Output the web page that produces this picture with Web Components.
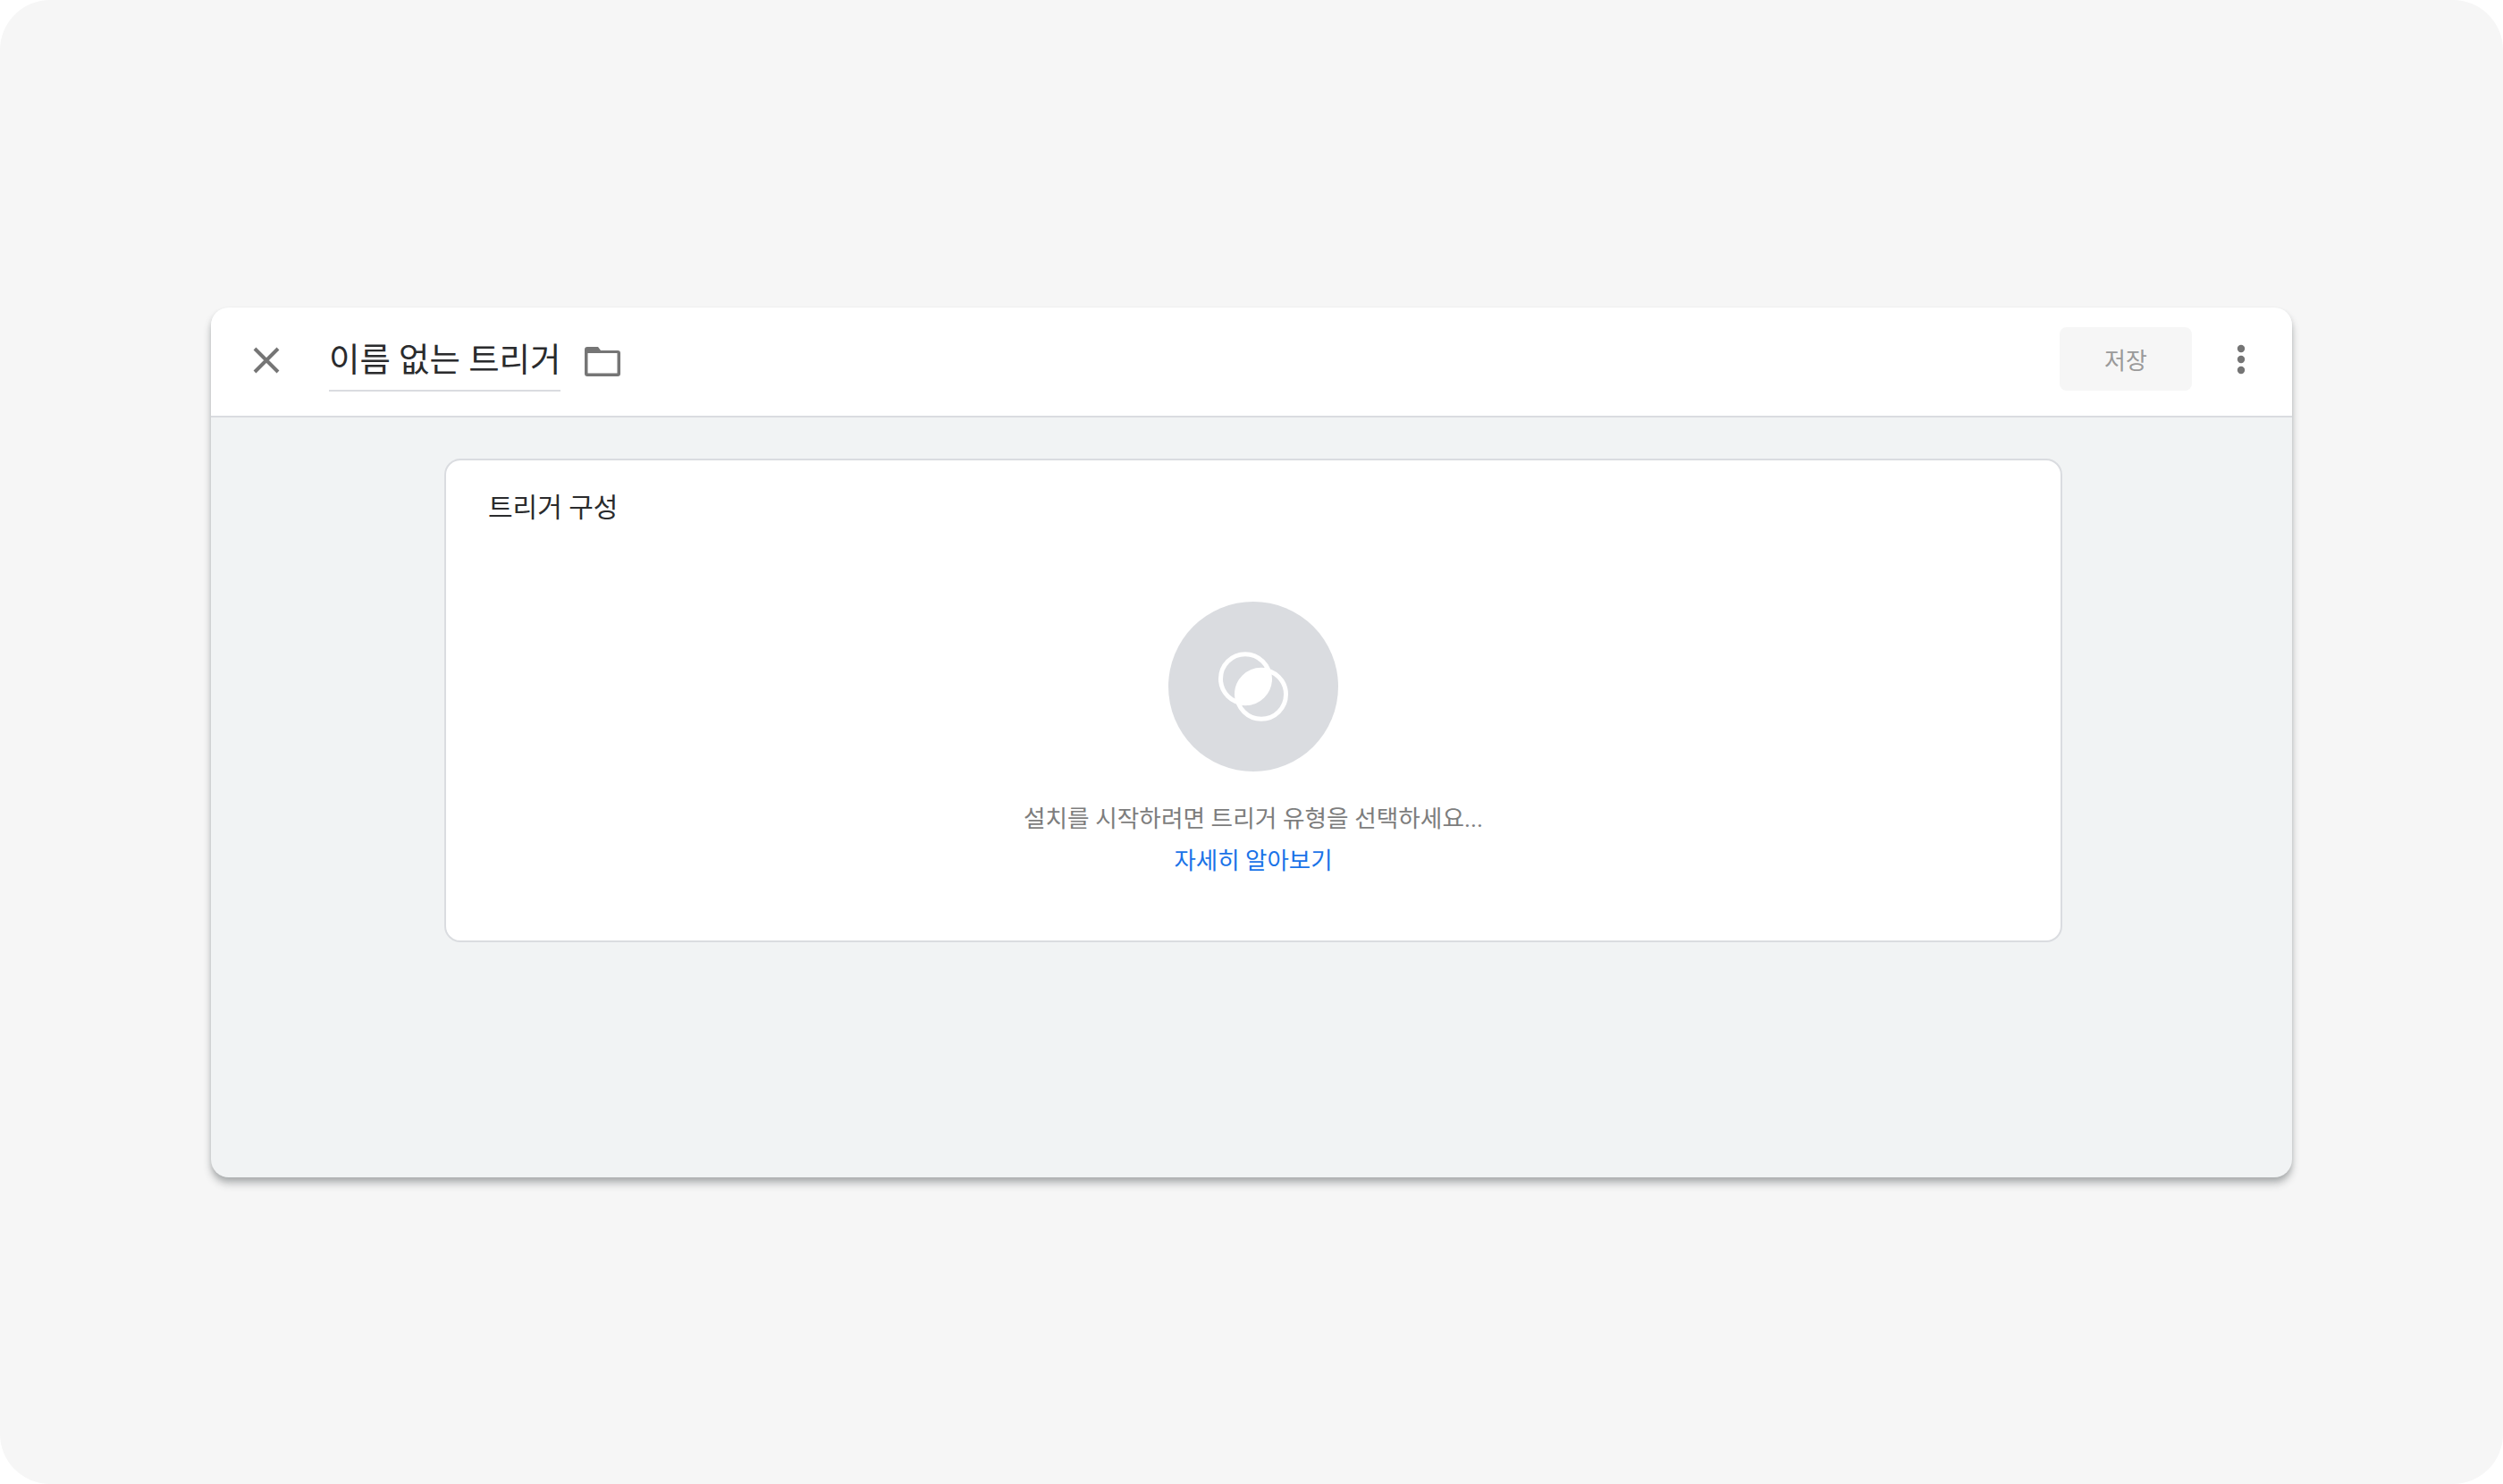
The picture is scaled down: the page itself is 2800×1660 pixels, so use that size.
<!DOCTYPE html>
<html lang="ko">
<head>
<meta charset="utf-8">
<title>트리거</title>
<style>
  html, body { margin: 0; background: #fff; }
  body { width: 2800px; height: 1660px; overflow: hidden; font-family: Roboto, "Noto Sans CJK KR", sans-serif; }
</style>
</head>
<body>
<trigger-stage>
  <trigger-window>
    <trigger-header slot="header" title-text="이름 없는 트리거" save-text="저장"></trigger-header>
    <trigger-card heading="트리거 구성" hint="설치를 시작하려면 트리거 유형을 선택하세요..." link="자세히 알아보기"></trigger-card>
  </trigger-window>
</trigger-stage>

<script>
class TriggerStage extends HTMLElement {
  constructor() {
    super();
    this.attachShadow({ mode: "open" });
    this.shadowRoot.innerHTML = `
      <style>
        :host {
          display: block;
          box-sizing: border-box;
          width: 2800px;
          height: 1660px;
          padding: 344px 236px 0;
          background: #f6f6f6;
          border-radius: 56px;
        }
      </style>
      <slot></slot>`;
  }
}

class TriggerWindow extends HTMLElement {
  constructor() {
    super();
    this.attachShadow({ mode: "open" });
    this.shadowRoot.innerHTML = `
      <style>
        :host {
          display: flex;
          flex-direction: column;
          height: 973px;
          background: #f1f3f4;
          border-radius: 20px;
          overflow: hidden;
          box-shadow: 0 7px 9px rgba(60, 64, 67, 0.32), 0 3px 5px rgba(60, 64, 67, 0.12);
        }
        .body {
          flex: 1;
          padding: 46px 257px 0 261px;
        }
      </style>
      <slot name="header"></slot>
      <div class="body"><slot></slot></div>`;
  }
}

class TriggerHeader extends HTMLElement {
  constructor() {
    super();
    this.attachShadow({ mode: "open" });
    this.shadowRoot.innerHTML = `
      <style>
        :host {
          display: flex;
          align-items: center;
          box-sizing: border-box;
          height: 123px;
          background: #fff;
          border-bottom: 2px solid #dadce0;
        }
        .close { width: 32px; height: 32px; margin: 0 0 4px 46px; flex: none; }
        .title {
          margin-left: 54px;
          font-size: 37.4px;
          line-height: 49px;
          color: #2a2b2d;
          border-bottom: 2px solid #dadce0;
          padding-bottom: 8px;
          margin-top: 8px;
          white-space: nowrap;
        }
        .folder { width: 40px; height: 33px; margin-left: 27px; flex: none; }
        .save {
          margin-left: auto;
          width: 148px;
          height: 71px;
          display: flex;
          align-items: center;
          justify-content: center;
          border-radius: 8px;
          background: #f6f6f6;
          color: #9a9a9a;
          font-size: 26px;
          margin-bottom: 7px;
        }
        .more { width: 10px; height: 34px; margin: 0 52px 6px 50px; flex: none; }
      </style>
      <svg class="close" viewBox="0 0 32 32"><path d="M3 3 L29 29 M29 3 L3 29" stroke="#757575" stroke-width="4" fill="none"/></svg>
      <div class="title"></div>
      <svg class="folder" viewBox="0 0 40 33"><path d="M3 0 H15 L18 4 H37 A3 3 0 0 1 40 7 V30 A3 3 0 0 1 37 33 H3 A3 3 0 0 1 0 30 V3 A3 3 0 0 1 3 0 Z M3.5 7 V29.5 H36.5 V7 Z" fill="#757575" fill-rule="evenodd"/></svg>
      <div class="save"></div>
      <svg class="more" viewBox="0 0 10 34"><circle cx="5" cy="5" r="4.2" fill="#757575"/><circle cx="5" cy="17" r="4.2" fill="#757575"/><circle cx="5" cy="29" r="4.2" fill="#757575"/></svg>`;
  }

  connectedCallback() {
    this.shadowRoot.querySelector(".title").textContent = this.getAttribute("title-text");
    this.shadowRoot.querySelector(".save").textContent = this.getAttribute("save-text");
  }
}

class TriggerCard extends HTMLElement {
  constructor() {
    super();
    this.attachShadow({ mode: "open" });
    this.shadowRoot.innerHTML = `
      <style>
        :host {
          display: block;
          box-sizing: border-box;
          height: 541px;
          padding: 33px 47px 0;
          background: #fff;
          border: 2px solid #dadce0;
          border-radius: 18px;
        }
        h2 {
          margin: 0;
          font-size: 30px;
          line-height: 40px;
          font-weight: 400;
          color: #2a2b2d;
        }
        .empty {
          display: flex;
          flex-direction: column;
          align-items: center;
          margin-top: 85px;
        }
        .badge {
          width: 190px;
          height: 190px;
          border-radius: 50%;
          background: #dadce0;
          display: flex;
          align-items: center;
          justify-content: center;
        }
        .badge svg { width: 80px; height: 80px; }
        .hint {
          margin-top: 31px;
          font-size: 26.7px;
          line-height: 44px;
          color: #7d7d7d;
        }
        a {
          font-size: 26.5px;
          line-height: 50px;
          color: #1a73e8;
          text-decoration: none;
        }
      </style>
      <h2></h2>
      <div class="empty">
        <div class="badge">
          <svg viewBox="0 0 80 80">
            <defs><clipPath id="lens"><circle cx="31" cy="31.3" r="28"/></clipPath></defs>
            <circle cx="31" cy="31.3" r="27.5" fill="none" stroke="#fff" stroke-width="5"/>
            <circle cx="49" cy="48.7" r="27.5" fill="none" stroke="#fff" stroke-width="5"/>
            <circle cx="49" cy="48.7" r="27.5" fill="#fff" clip-path="url(#lens)"/>
          </svg>
        </div>
        <div class="hint"></div>
        <a href="#"></a>
      </div>`;
  }

  connectedCallback() {
    this.shadowRoot.querySelector("h2").textContent = this.getAttribute("heading");
    this.shadowRoot.querySelector(".hint").textContent = this.getAttribute("hint");
    this.shadowRoot.querySelector("a").textContent = this.getAttribute("link");
  }
}

customElements.define("trigger-stage", TriggerStage);
customElements.define("trigger-window", TriggerWindow);
customElements.define("trigger-header", TriggerHeader);
customElements.define("trigger-card", TriggerCard);
</script>
</body>
</html>
